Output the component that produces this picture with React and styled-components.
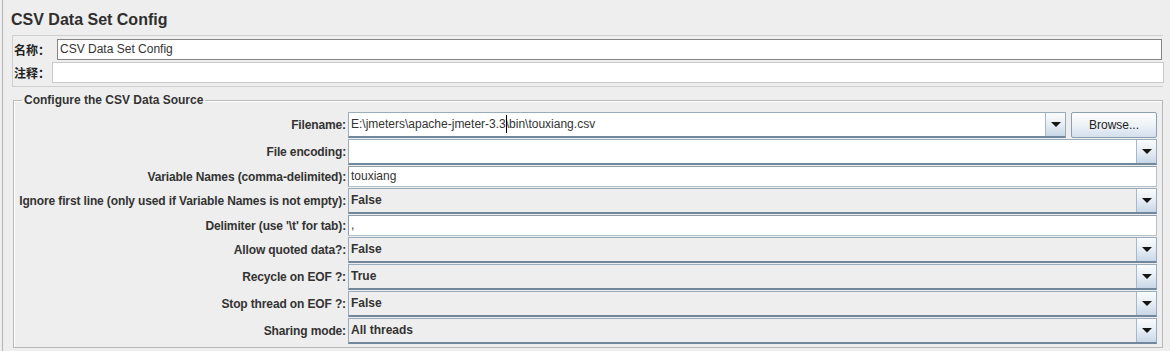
import { Fragment } from "react";
import styled, { createGlobalStyle } from "styled-components";

const GlobalStyle = createGlobalStyle`
  html, body {
    margin: 0;
    padding: 0;
    background: #eeeeee;
    overflow: hidden;
  }
  body {
    font-family: "Liberation Sans", Arial, sans-serif;
    color: #333333;
  }
`;

const Page = styled.div`
  height: 351px;
  margin-left: 2px;
  border-left: 1px solid #b4b4b4;
  padding: 0 7px 0 9px;
  box-sizing: border-box;
`;

const Title = styled.div`
  font-size: 16px;
  font-weight: bold;
  line-height: 20px;
  padding-top: 10px;
  margin: 0 0 5px -1px;
  color: #2e2e2e;
`;

const NamePanel = styled.div`
  border: 1px solid #cfcfcf;
  border-right: none;
  height: 52px;
  box-sizing: border-box;
  display: flex;
  flex-direction: column;
  gap: 2px;
  padding-top: 3px;
`;

const NameRow = styled.div`
  display: flex;
  align-items: center;
  gap: ${(p) => p.$gap}px;
`;

const NameLabel = styled.span`
  font-family: "Liberation Sans", "Noto Sans CJK SC", sans-serif;
  font-size: 12px;
  font-weight: bold;
  color: #222;
  padding-left: 1px;
`;

const NameField = styled.div`
  flex: 1;
  height: 21px;
  box-sizing: border-box;
  background: #ffffff;
  border: 1px solid ${(p) => (p.$light ? "#c9c9c9" : "#858585")};
  margin-right: ${(p) => (p.$light ? "-1px" : "1px")};
  font-size: 12px;
  line-height: 19px;
  padding-left: 2px;
  color: #333;
`;

const Group = styled.fieldset`
  margin: 6px 0 0 1px;
  padding: 5px 5px 3px 4px;
  border: 1px solid #b9b9b9;
  box-shadow: inset 1px 1px 0 #ffffff;
  min-width: 0;
`;

const Legend = styled.legend`
  font-size: 12px;
  font-weight: bold;
  line-height: 14px;
  padding: 0 2px;
  margin-left: 4px;
  color: #333;
`;

const Form = styled.div`
  display: grid;
  grid-template-columns: 328px 1fr;
  column-gap: 2px;
  row-gap: 1px;
  align-items: center;
`;

const Label = styled.label`
  font-size: 12px;
  font-weight: bold;
  letter-spacing: -0.13px;
  text-align: right;
  justify-self: end;
  white-space: nowrap;
  color: #333;
`;

const FileRow = styled.div`
  display: flex;
  gap: 5px;
`;

const Combo = styled.div`
  flex: 1;
  display: flex;
  height: 26px;
  box-sizing: border-box;
  border: 1px solid #9aabbc;
  border-bottom: 2px solid #71879c;
  background: ${(p) => (p.$editable ? "#ffffff" : "#efeeee")};
`;

const ComboText = styled.div`
  flex: 1;
  padding-left: 2px;
  font-size: 12px;
  line-height: 23px;
  font-weight: ${(p) => (p.$editable ? "normal" : "bold")};
  color: #333;
  white-space: nowrap;
  overflow: hidden;
`;

const ArrowButton = styled.div`
  width: 19px;
  border-left: 1px solid #a9b8c8;
  background: linear-gradient(#fafcfd, #e6edf4 50%, #c8d7e7);
  display: flex;
  align-items: center;
  justify-content: center;
  &::after {
    content: "";
    border-left: 5px solid transparent;
    border-right: 5px solid transparent;
    border-top: 5px solid #151515;
    margin-top: -1px;
  }
`;

const Caret = styled.span`
  position: relative;
  &::before {
    content: "";
    position: absolute;
    left: 0;
    top: -2px;
    bottom: -2px;
    border-left: 1px solid #000;
  }
`;

const BrowseButton = styled.button`
  width: 86px;
  height: 26px;
  box-sizing: border-box;
  border: 1px solid #8d9fb2;
  border-radius: 2px;
  background: linear-gradient(#fdfeff, #eef3f8 50%, #d3dfec);
  font-family: "Liberation Sans", Arial, sans-serif;
  font-size: 12px;
  color: #222;
  padding: 0;
`;

const TextField = styled.div`
  height: 21px;
  box-sizing: border-box;
  background: #ffffff;
  border: 1px solid #b7c0c9;
  border-top-color: #8f9caa;
  border-left-color: #8f9caa;
  font-size: 12px;
  line-height: 19px;
  padding-left: 2px;
  color: #333;
`;

const ComboBox = ({ value, editable }) => (
  <Combo $editable={editable}>
    <ComboText $editable={editable}>{value}</ComboText>
    <ArrowButton />
  </Combo>
);

const rows = [
  { label: "File encoding:", type: "combo", editable: true, value: "" },
  { label: "Variable Names (comma-delimited):", type: "text", value: "touxiang" },
  { label: "Ignore first line (only used if Variable Names is not empty):", type: "combo", value: "False" },
  { label: "Delimiter (use '\\t' for tab):", type: "text", value: "," },
  { label: "Allow quoted data?:", type: "combo", value: "False" },
  { label: "Recycle on EOF ?:", type: "combo", value: "True" },
  { label: "Stop thread on EOF ?:", type: "combo", value: "False" },
  { label: "Sharing mode:", type: "combo", value: "All threads" },
];

export default function App() {
  return (
    <>
      <GlobalStyle />
      <Page>
        <Title>CSV Data Set Config</Title>
        <NamePanel>
          <NameRow $gap={7}>
            <NameLabel>名称：</NameLabel>
            <NameField>CSV Data Set Config</NameField>
          </NameRow>
          <NameRow $gap={2}>
            <NameLabel>注释：</NameLabel>
            <NameField $light />
          </NameRow>
        </NamePanel>
        <Group>
          <Legend>Configure the CSV Data Source</Legend>
          <Form>
            <Label>Filename:</Label>
            <FileRow>
              <Combo $editable>
                <ComboText $editable>
                  E:\jmeters\apache-jmeter-3.3<Caret>\</Caret>bin\touxiang.csv
                </ComboText>
                <ArrowButton />
              </Combo>
              <BrowseButton>Browse...</BrowseButton>
            </FileRow>
            {rows.map((r) => (
              <Fragment key={r.label}>
                <Label>{r.label}</Label>
                {r.type === "combo" ? (
                  <ComboBox value={r.value} editable={r.editable} />
                ) : (
                  <TextField>{r.value}</TextField>
                )}
              </Fragment>
            ))}
          </Form>
        </Group>
      </Page>
    </>
  );
}
